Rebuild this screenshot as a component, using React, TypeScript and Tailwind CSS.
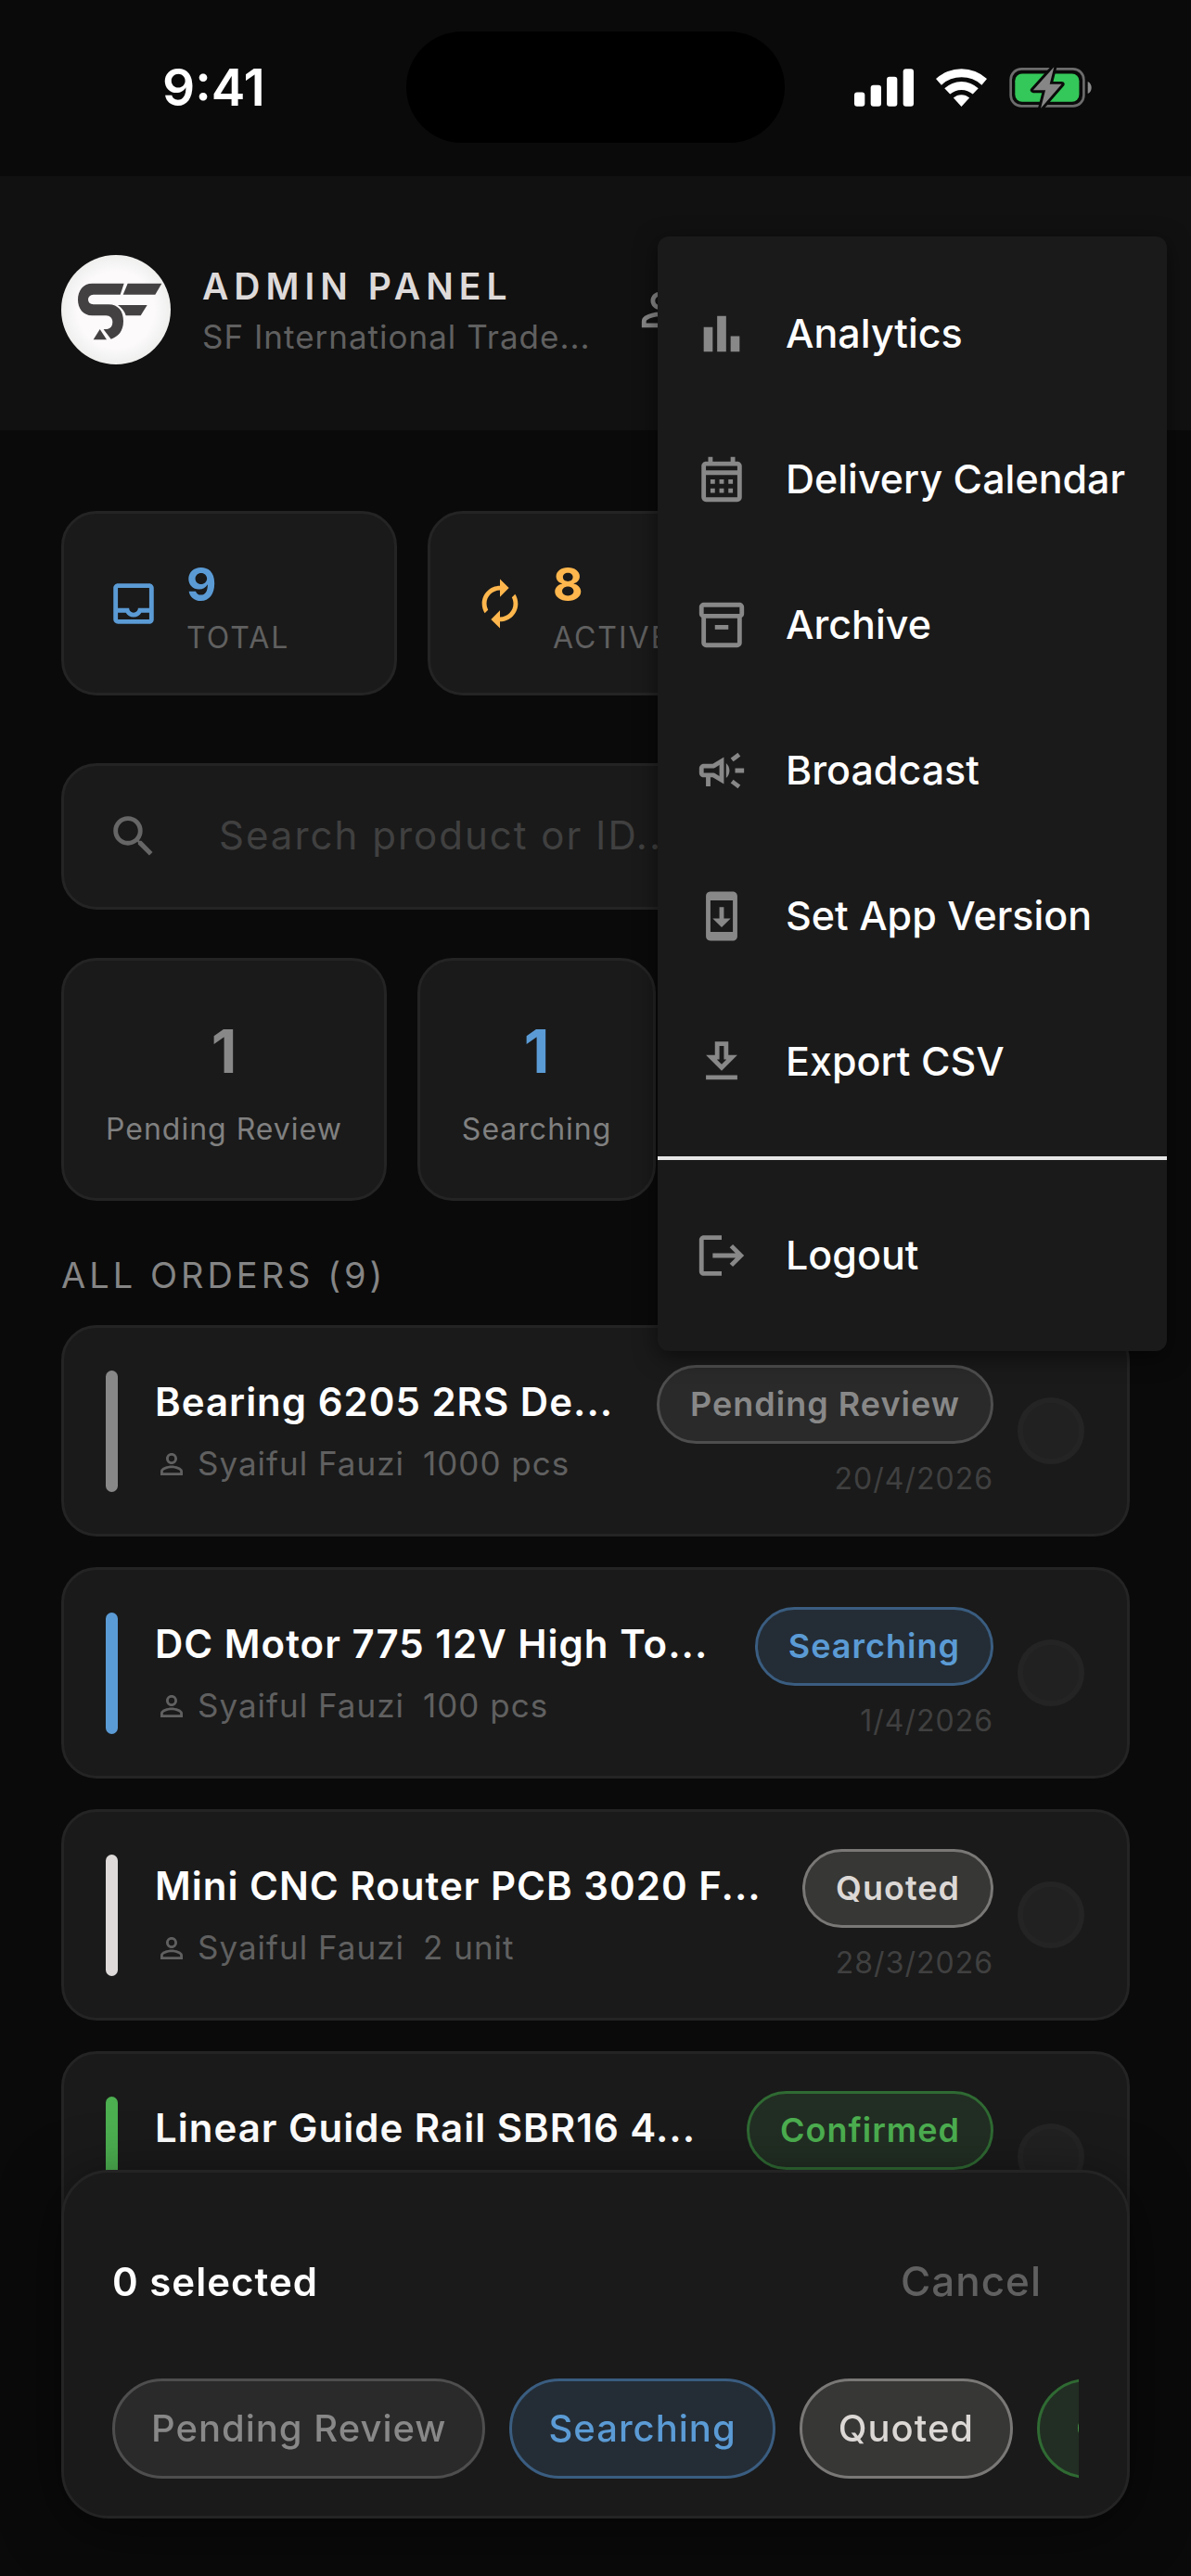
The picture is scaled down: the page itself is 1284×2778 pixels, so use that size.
import React, { useState } from 'react';
import type { IconType } from 'react-icons';
import {
  MdAutorenew,
  MdBarChart,
  MdLogout,
  MdOutlineCalendarMonth,
  MdOutlineCampaign,
  MdOutlineDownload,
  MdOutlineInbox,
  MdOutlineInventory2,
  MdOutlineManageAccounts,
  MdOutlineSystemUpdate,
  MdPersonOutline,
  MdSearch,
} from 'react-icons/md';

type Status = 'Pending Review' | 'Searching' | 'Quoted' | 'Confirmed';

interface Order {
  id: number;
  title: string;
  customer: string;
  quantity: string;
  date: string;
  status: Status;
}

const orders: Order[] = [
  { id: 1, title: 'Bearing 6205 2RS De...', customer: 'Syaiful Fauzi', quantity: '1000 pcs', date: '20/4/2026', status: 'Pending Review' },
  { id: 2, title: 'DC Motor 775 12V High To...', customer: 'Syaiful Fauzi', quantity: '100 pcs', date: '1/4/2026', status: 'Searching' },
  { id: 3, title: 'Mini CNC Router PCB 3020 F...', customer: 'Syaiful Fauzi', quantity: '2 unit', date: '28/3/2026', status: 'Quoted' },
  { id: 4, title: 'Linear Guide Rail SBR16 4...', customer: '', quantity: '', date: '', status: 'Confirmed' },
];

const statuses: Status[] = ['Pending Review', 'Searching', 'Quoted', 'Confirmed'];

const pillColors: Record<Status, string> = {
  'Pending Review': 'bg-[#2a2a2a] border-[#4e4e4e] text-[#888888]',
  Searching: 'bg-[#242d36] border-[#3a5d80] text-[#5b9bd5]',
  Quoted: 'bg-[#373735] border-[#7a7876] text-[#dcd8d6]',
  Confirmed: 'bg-[#222e23] border-[#2f6a33] text-[#4caf50]',
};

const barColors: Record<Status, string> = {
  'Pending Review': 'bg-[#888888]',
  Searching: 'bg-[#5b9bd5]',
  Quoted: 'bg-[#dedada]',
  Confirmed: 'bg-[#4caf50]',
};

const menuItems: { label: string; icon: IconType }[] = [
  { label: 'Analytics', icon: MdBarChart },
  { label: 'Delivery Calendar', icon: MdOutlineCalendarMonth },
  { label: 'Archive', icon: MdOutlineInventory2 },
  { label: 'Broadcast', icon: MdOutlineCampaign },
  { label: 'Set App Version', icon: MdOutlineSystemUpdate },
  { label: 'Export CSV', icon: MdOutlineDownload },
];

const card = 'bg-[#1a1a1a] border-[3px] border-[#242424] rounded-[38px]';

const StatusBar: React.FC = () => (
  <div className="grid grid-cols-[1fr_408px_1fr] items-center pt-[34px] pb-[36px]">
    <span className="pl-[175px] text-[55px] leading-[60px] font-semibold text-white">9:41</span>
    <div className="h-[120px] rounded-full bg-black" />
    <div className="flex items-center justify-end gap-6 pr-[107px]">
      <svg viewBox="33 127 192 122" className="w-16 h-[41px]" fill="#fff">
        <rect x="33" y="203" width="34" height="46" rx="9" />
        <rect x="86" y="180" width="34" height="69" rx="9" />
        <rect x="138" y="153" width="34" height="96" rx="9" />
        <rect x="191" y="127" width="34" height="122" rx="9" />
      </svg>
      <svg viewBox="295 126 166 123" className="w-[55px] h-[41px]" fill="#fff">
        <path d="M461 159 L444 179 A96 96 0 0 0 313 179 L295 159 A122 122 0 0 1 461 159Z" />
        <path d="M433 190 L415 209 A55 55 0 0 0 341 209 L323 190 A80 80 0 0 1 433 190Z" />
        <path d="M404 221 L378 249 L352 221 A38 38 0 0 1 404 221Z" />
      </svg>
      <svg viewBox="534 120 267 136" className="w-[89px] h-[45px]">
        <rect x="538" y="127" width="238" height="121" rx="35" fill="none" stroke="#6c6c6c" strokeWidth="8" />
        <rect x="552" y="143" width="209" height="91" rx="23" fill="#34c759" />
        <path d="M789 168 C805 174 805 202 789 208Z" fill="#8a8a8a" />
        <path
          d="M679 121 L611 196 H651 L636 255 L704 177 H665Z"
          fill="#868686"
          stroke="#0a0a0a"
          strokeWidth="18"
          strokeLinejoin="round"
          paintOrder="stroke"
        />
      </svg>
    </div>
  </div>
);

const Logo: React.FC = () => (
  <svg viewBox="27 33 354 354" className="size-[118px] shrink-0">
    <defs>
      <radialGradient id="disc">
        <stop offset="0.7" stopColor="#fcfafb" />
        <stop offset="1" stopColor="#efefee" />
      </radialGradient>
    </defs>
    <circle cx="204" cy="210" r="177" fill="url(#disc)" />
    <g fill="#444142">
      <path d="M230 125 L218 161 H131 C120 162 114 168 114 177 C114 186 120 192 131 193 H180 C212 193 228 215 228 247 C228 280 211 298 188 305 L164 274 C168 272 172 273 178 272 C188 270 193 262 193 250 C193 238 185 229 172 229 H127 C97 229 81 205 81 178 C81 148 98 125 127 125Z" />
      <path d="M242 125 H352 L331 161 H227Z" />
      <path d="M210 195 H305 L284 229 H236 C232 215 224 205 210 195Z" />
      <path d="M152 273 L174 307 H131Z" />
    </g>
  </svg>
);

const MenuItem: React.FC<{ label: string; icon: IconType }> = ({ label, icon: Icon }) => (
  <button role="menuitem" className="flex h-[157px] w-full items-center gap-10 pl-10 text-left">
    <Icon size={58} className="shrink-0 text-[#888888]" />
    <span className="whitespace-nowrap text-[43px] font-medium text-white">{label}</span>
  </button>
);

const OverflowMenu: React.FC = () => (
  <div
    role="menu"
    className="absolute top-[65px] right-[26px] z-10 w-[549px] rounded-xl bg-[#1a1a1a] pt-[26px] pb-[25px] shadow-[0_6px_24px_rgba(0,0,0,0.5)]"
  >
    {menuItems.map((item) => (
      <MenuItem key={item.label} {...item} />
    ))}
    <div className="flex h-[52px] items-center">
      <hr className="w-full border-t-4 border-[#e6e6e6]" />
    </div>
    <MenuItem label="Logout" icon={MdLogout} />
  </div>
);

const Stat: React.FC<{ icon: IconType; value: number; label: string; color: string }> = ({ icon: Icon, value, label, color }) => (
  <div className={`${card} flex h-[199px] items-center gap-7 pl-[46px]`}>
    <Icon size={58} className={color} />
    <div className="pt-3.5">
      <p className={`text-[50px] leading-[60px] font-bold ${color}`}>{value}</p>
      <p className="text-[32px] leading-[56px] tracking-[2px] text-[#606060]">{label}</p>
    </div>
  </div>
);

const StatusCount: React.FC<{ count: number; label: string; color: string }> = ({ count, label, color }) => (
  <button className={`${card} flex h-[262px] flex-col items-center justify-center gap-[22px] px-[45px] pt-2.5`}>
    <span className={`text-[64px] leading-[76px] font-bold ${color}`}>{count}</span>
    <span className="whitespace-nowrap text-[32px] leading-[48px] tracking-[1px] text-[#808080]">{label}</span>
  </button>
);

const OrderRow: React.FC<{ order: Order; checked: boolean; onToggle: () => void }> = ({ order, checked, onToggle }) => (
  <li className={`${card} flex h-[228px] items-center pr-[46px] pl-[45px]`}>
    <span className={`h-[131px] w-[13px] shrink-0 rounded-full ${barColors[order.status]}`} />
    <div className="ml-10 min-w-0 flex-1">
      <p className="whitespace-nowrap text-[42px] leading-[56px] font-semibold tracking-[1px] text-white">{order.title}</p>
      <p className="mt-[15px] flex h-12 items-center text-[35px] whitespace-nowrap tracking-[1px] text-[#606060]">
        <MdPersonOutline size={36} className="mr-2.5" />
        <span>{order.customer}</span>
        <span className="ml-5">{order.quantity}</span>
      </p>
    </div>
    <div className="flex flex-col items-end gap-[18px]">
      <span
        className={`flex h-[85px] items-center rounded-full border-[3px] px-[33px] text-[36px] font-semibold tracking-[1px] whitespace-nowrap ${pillColors[order.status]}`}
      >
        {order.status}
      </span>
      <span className="h-10 text-[32px] leading-10 tracking-[1px] text-[#404040]">{order.date}</span>
    </div>
    <input
      type="checkbox"
      checked={checked}
      onChange={onToggle}
      aria-label={order.title}
      className="ml-[26px] size-[72px] shrink-0 appearance-none rounded-full border-[6px] border-[#242424] bg-[#212121] checked:bg-[#5b9bd5]"
    />
  </li>
);

const App: React.FC = () => {
  const [query, setQuery] = useState('');
  const [selected, setSelected] = useState<number[]>([]);

  const toggle = (id: number) =>
    setSelected((prev) => (prev.includes(id) ? prev.filter((x) => x !== id) : [...prev, id]));

  return (
    <div className="min-h-screen overflow-x-hidden bg-[#0a0a0a] font-['Inter',sans-serif]">
      <StatusBar />

      <header className="relative flex items-center bg-[#111111] px-[66px] pt-[85px] pb-[71px]">
        <Logo />
        <div className="ml-[34px] min-w-0 flex-1 pt-1 whitespace-nowrap">
          <h1 className="text-[39px] leading-[54px] font-semibold tracking-[6px] text-[#dedada]">ADMIN PANEL</h1>
          <p className="text-[35px] leading-[54px] tracking-[1px] text-[#606060]">SF International Trade...</p>
        </div>
        <div className="flex w-[531px]">
          <button aria-label="Users" className="text-[#888888]">
            <MdOutlineManageAccounts size={58} />
          </button>
        </div>
        <OverflowMenu />
      </header>

      <main className="px-[66px] pt-[87px]">
        <section className="grid grid-cols-3 gap-[33px]">
          <Stat icon={MdOutlineInbox} value={9} label="TOTAL" color="text-[#5b9bd5]" />
          <Stat icon={MdAutorenew} value={8} label="ACTIVE" color="text-[#ffb74d]" />
        </section>

        <label className={`${card} mt-[73px] flex h-[158px] items-center gap-[63px] pl-[46px]`}>
          <MdSearch size={58} className="shrink-0 text-[#666666]" />
          <input
            type="text"
            value={query}
            onChange={(e) => setQuery(e.target.value)}
            placeholder="Search product or ID..."
            className="min-w-0 flex-1 bg-transparent pb-1 text-[42px] tracking-[2px] text-white outline-none placeholder:text-[#404040]"
          />
        </label>

        <section className="mt-[52px] flex gap-[33px]">
          <StatusCount count={1} label="Pending Review" color="text-[#888888]" />
          <StatusCount count={1} label="Searching" color="text-[#5b9bd5]" />
        </section>

        <h2 className="mt-14 mb-[30px] text-[38px] leading-[48px] tracking-[4px] text-[#858585]">ALL ORDERS (9)</h2>

        <ul className="flex flex-col gap-[33px]">
          {orders.map((order) => (
            <OrderRow
              key={order.id}
              order={order}
              checked={selected.includes(order.id)}
              onToggle={() => toggle(order.id)}
            />
          ))}
        </ul>
      </main>

      {/* Bulk status bar */}
      <div className="fixed inset-x-[66px] bottom-[62px] rounded-[51px] border-[3px] border-[#242424] bg-[#1a1a1a] px-[52px] py-10 shadow-[0_12px_64px_rgba(0,0,0,0.5)]">
        <div className="flex h-[154px] items-center justify-between">
          <span className="text-[42px] font-semibold tracking-[1px] text-white">{selected.length} selected</span>
          <button onClick={() => setSelected([])} className="h-full px-10 text-[44px] font-medium tracking-[1px] text-[#606060]">
            Cancel
          </button>
        </div>
        <div className="mt-7 flex gap-[26px] overflow-hidden">
          {statuses.map((status) => (
            <button
              key={status}
              className={`h-[108px] shrink-0 rounded-full border-[3px] px-[39px] text-[40px] font-medium tracking-[1px] ${pillColors[status]}`}
            >
              {status}
            </button>
          ))}
        </div>
      </div>
    </div>
  );
};

export default App;
